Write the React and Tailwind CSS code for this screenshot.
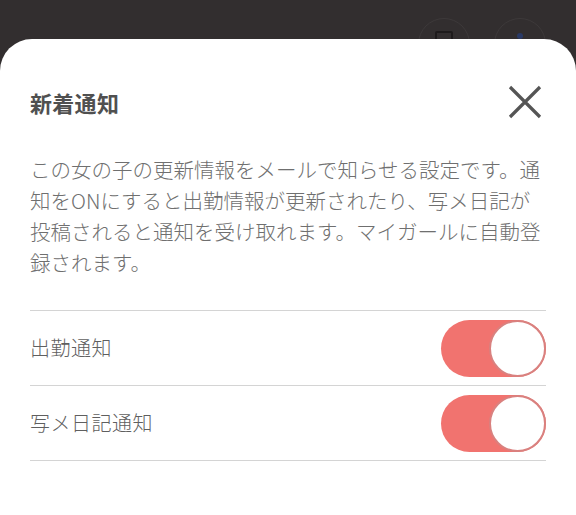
import React from "react";

const font = { fontFamily: '"Noto Sans CJK JP", "Noto Sans", sans-serif' };

function Toggle() {
  return (
    <div className="w-[105px] h-[57px] rounded-full bg-[#f1736f] flex items-center justify-end">
      <div className="w-[57px] h-[57px] rounded-full bg-white border-2 border-[#d9817f]" />
    </div>
  );
}

function Row({ label }) {
  return (
    <div className="h-[75px] border-b border-[#d4d4d4] flex items-center justify-between">
      <span className="text-[20px] font-light text-[#5f5f5f] tracking-[0.5px]">{label}</span>
      <Toggle />
    </div>
  );
}

export default function App() {
  return (
    <div
      className="w-[576px] h-[515px] bg-[#322e2f] flex flex-col overflow-hidden"
      style={font}
    >
      <div className="h-[39px] shrink-0 overflow-hidden flex justify-end gap-[24px] pr-[30px] pt-[18px]">
        <div className="w-[52px] h-[52px] rounded-full border border-[#3d393a] flex justify-center pt-[12px]">
          <div className="w-[18px] h-[16px] border-2 border-[#1e1b1c] rounded-[2px]" />
        </div>
        <div className="w-[52px] h-[52px] rounded-full border border-[#3d393a] flex justify-center pt-[14px]">
          <div className="w-[6px] h-[6px] rounded-full bg-[#2a3a66]" />
        </div>
      </div>
      <div className="flex-1 bg-white rounded-t-[32px] px-[30px]">
        <div className="mt-[43px] h-[40px] flex items-center justify-between">
          <h1 className="text-[22px] font-bold text-[#505050] tracking-[0.3px]">新着通知</h1>
          <svg width="34" height="34" viewBox="0 0 34 34" className="mr-[4px]">
            <path d="M2 2 L32 32 M32 2 L2 32" stroke="#555" strokeWidth="3.2" strokeLinecap="butt" />
          </svg>
        </div>
        <p className="mt-[32px] text-[20.5px] font-light leading-[31px] text-[#6f6f6f]">
          この女の子の更新情報をメールで知らせる設定です。通知をONにすると出勤情報が更新されたり、写メ日記が投稿されると通知を受け取れます。マイガールに自動登録されます。
        </p>
        <div className="mt-[32px] border-t border-[#d4d4d4]">
          <Row label="出勤通知" />
          <Row label="写メ日記通知" />
        </div>
      </div>
    </div>
  );
}
